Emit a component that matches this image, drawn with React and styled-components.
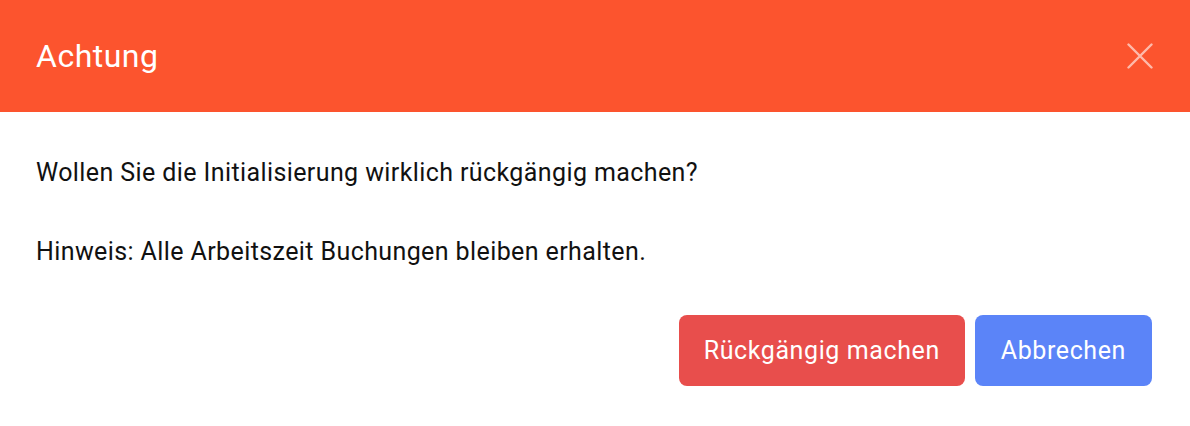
import React from 'react'
import styled, { createGlobalStyle } from 'styled-components'

const GlobalStyle = createGlobalStyle`
html, body {
  margin: 0;
  padding: 0;
  background: #ffffff;
  font-family: Roboto, "Liberation Sans", sans-serif;
}
`

const Dialog = styled.div`
width: 1190px;
height: 426px;
background: #ffffff;
display: flex;
flex-direction: column;
`

const Header = styled.header`
height: 112px;
background-color: #fc542e;
display: flex;
align-items: center;
justify-content: space-between;
padding: 0 36px;
box-sizing: border-box;
`

const Title = styled.h2`
margin: 0;
font-size: 32px;
font-weight: 400;
letter-spacing: 0.5px;
color: #ffffff;
`

const CloseButton = styled.button`
background: none;
border: none;
padding: 0;
width: 28px;
height: 28px;
display: flex;
align-items: center;
justify-content: center;
cursor: pointer;
color: rgba(255, 255, 255, 0.6);
`

const Body = styled.div`
padding: 48px 36px 0;
display: flex;
flex-direction: column;
gap: 53px;
`

const Text = styled.p`
margin: 0;
font-size: 25px;
line-height: 26px;
letter-spacing: 0.4px;
color: #111111;
`

const Footer = styled.div`
display: flex;
justify-content: flex-end;
gap: 10px;
padding: 50px 38px 0;
`

const Button = styled.button`
height: 71px;
padding: 0 ${props => props.variant === 'danger' ? '25px' : '26px'};
border: none;
border-radius: 8px;
font-family: inherit;
font-size: 25px;
letter-spacing: 0.6px;
color: #ffffff;
background-color: ${props => props.variant === 'danger' ? '#e84e4c' : '#5b84f8'};
cursor: pointer;
`

const App = () => {
  return (
    <Dialog>
      <GlobalStyle />
      <Header>
        <Title>Achtung</Title>
        <CloseButton aria-label='Schließen'>
          <svg width='26' height='26' viewBox='0 0 26 26'>
            <path d='M1.5 1.5 L24.5 24.5 M24.5 1.5 L1.5 24.5' stroke='currentColor' strokeWidth='2.4' strokeLinecap='round' />
          </svg>
        </CloseButton>
      </Header>
      <Body>
        <Text>Wollen Sie die Initialisierung wirklich rückgängig machen?</Text>
        <Text>Hinweis: Alle Arbeitszeit Buchungen bleiben erhalten.</Text>
      </Body>
      <Footer>
        <Button variant='danger'>Rückgängig machen</Button>
        <Button>Abbrechen</Button>
      </Footer>
    </Dialog>
  )
}

export default App
